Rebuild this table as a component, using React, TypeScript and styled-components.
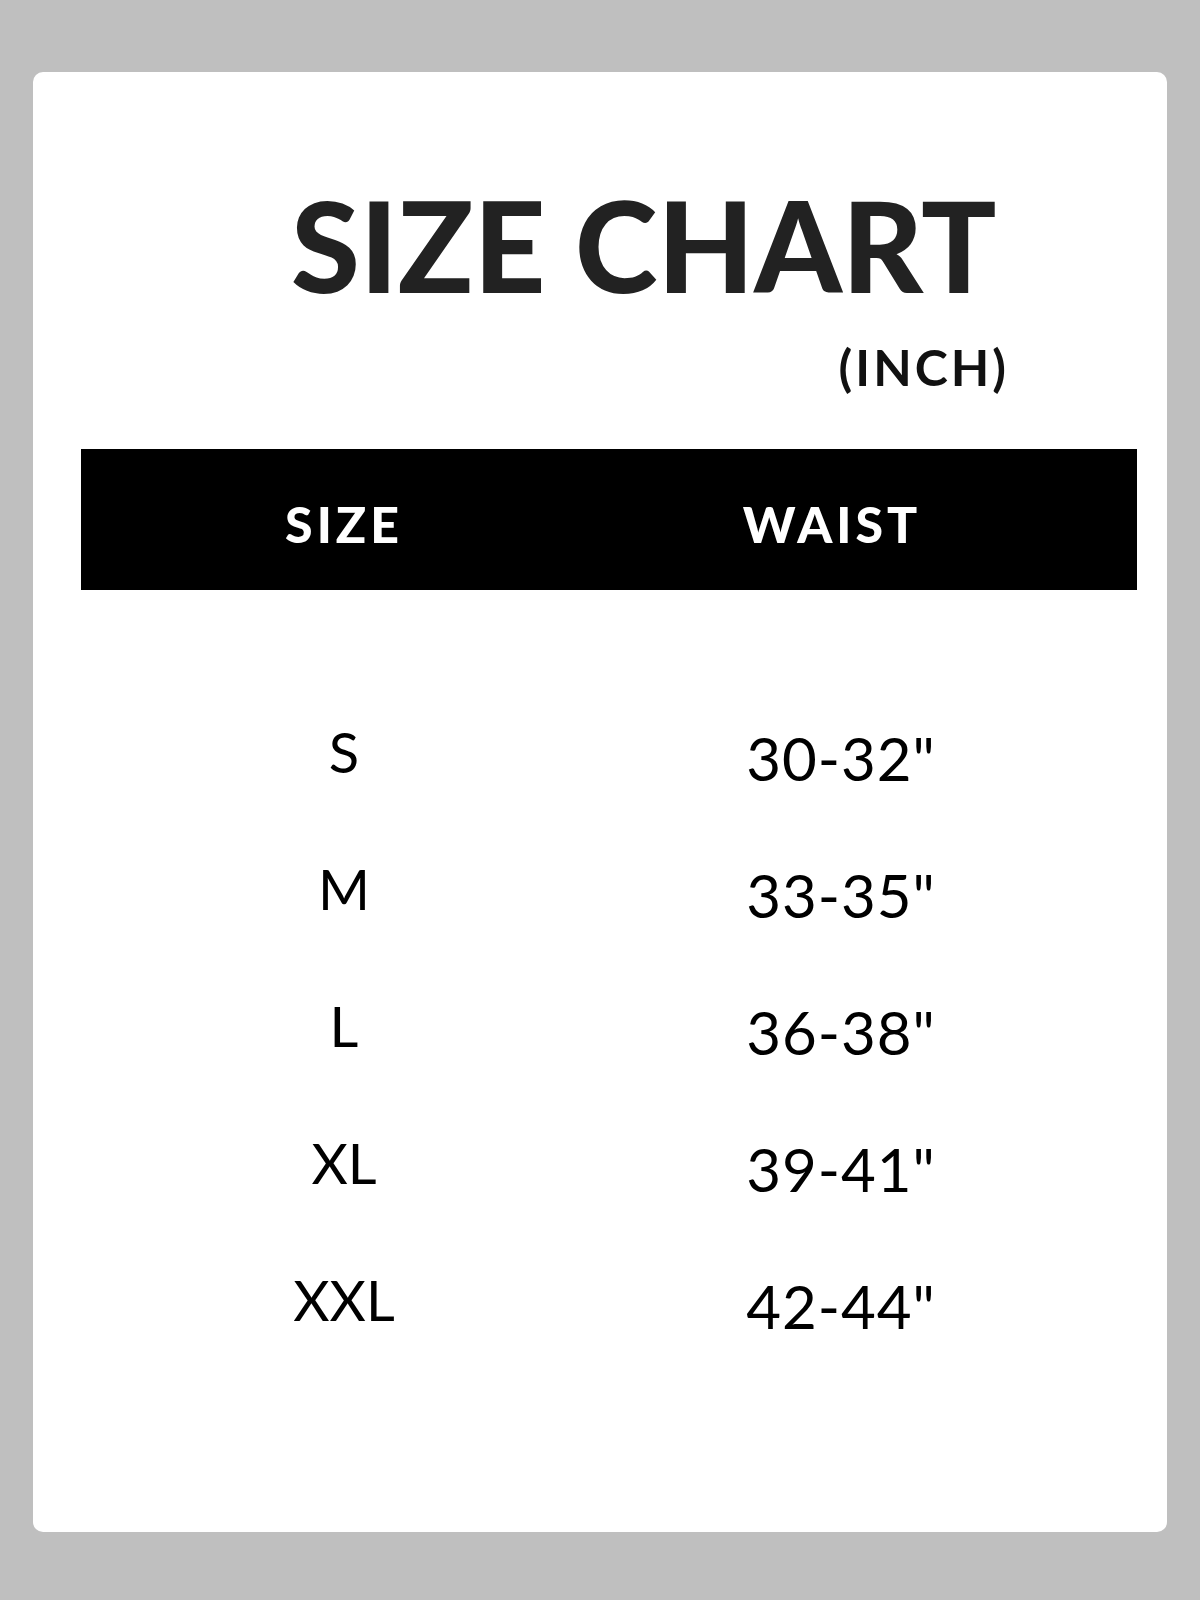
import styled, { createGlobalStyle } from "styled-components";

const GlobalStyle = createGlobalStyle`
  html, body {
    margin: 0;
    padding: 0;
    background: #bfbfbf;
  }
  body {
    font-family: Lato, "Noto Sans", sans-serif;
  }
`;

const rows = [
  { size: "S", waist: '30-32"' },
  { size: "M", waist: '33-35"' },
  { size: "L", waist: '36-38"' },
  { size: "XL", waist: '39-41"' },
  { size: "XXL", waist: '42-44"' },
];

export default function App() {
  return (
    <>
      <GlobalStyle />
      <Page>
        <Card>
          <Title>SIZE CHART</Title>
          <Unit>(INCH)</Unit>
          <HeadBar>
            <HeadCell>SIZE</HeadCell>
            <HeadCell>WAIST</HeadCell>
          </HeadBar>
          <Body>
            {rows.map((r) => (
              <Row key={r.size}>
                <SizeCell>{r.size}</SizeCell>
                <WaistCell>{r.waist}</WaistCell>
              </Row>
            ))}
          </Body>
        </Card>
      </Page>
    </>
  );
}

const Page = styled.div`
  width: 1200px;
  height: 1600px;
  padding: 72px 33px 68px;
  box-sizing: border-box;
`;

const Card = styled.div`
  display: flex;
  flex-direction: column;
  height: 1460px;
  background: #fff;
  border-radius: 10px;
`;

const Title = styled.h1`
  margin: 111px 0 0 258px;
  font-size: 125px;
  font-weight: 900;
  line-height: 1;
  color: #222;
  letter-spacing: 0;
`;

const Unit = styled.div`
  align-self: flex-end;
  margin: 34px 158px 0 0;
  font-size: 50px;
  font-weight: 700;
  line-height: 1;
  letter-spacing: 3px;
  color: #111;
`;

const HeadBar = styled.div`
  display: grid;
  grid-template-columns: 526px 450px;
  align-items: center;
  height: 141px;
  margin: 57px 30px 0 48px;
  padding-top: 8px;
  box-sizing: border-box;
  background: #000;
`;

const HeadCell = styled.div`
  text-align: center;
  color: #fff;
  font-size: 50px;
  font-weight: 900;
  letter-spacing: 4px;
  line-height: 1;
`;

const Body = styled.div`
  display: flex;
  flex-direction: column;
  margin: 99px 30px 0 48px;
`;

const Row = styled.div`
  display: grid;
  grid-template-columns: 526px 468px;
  align-items: center;
  height: 137px;
`;

const SizeCell = styled.div`
  text-align: center;
  font-size: 56px;
  font-weight: 400;
  color: #000;
  line-height: 1;
  margin-top: -12px;
`;

const WaistCell = styled.div`
  text-align: center;
  font-size: 60px;
  font-weight: 400;
  color: #000;
  line-height: 1;
  letter-spacing: 1px;
`;
